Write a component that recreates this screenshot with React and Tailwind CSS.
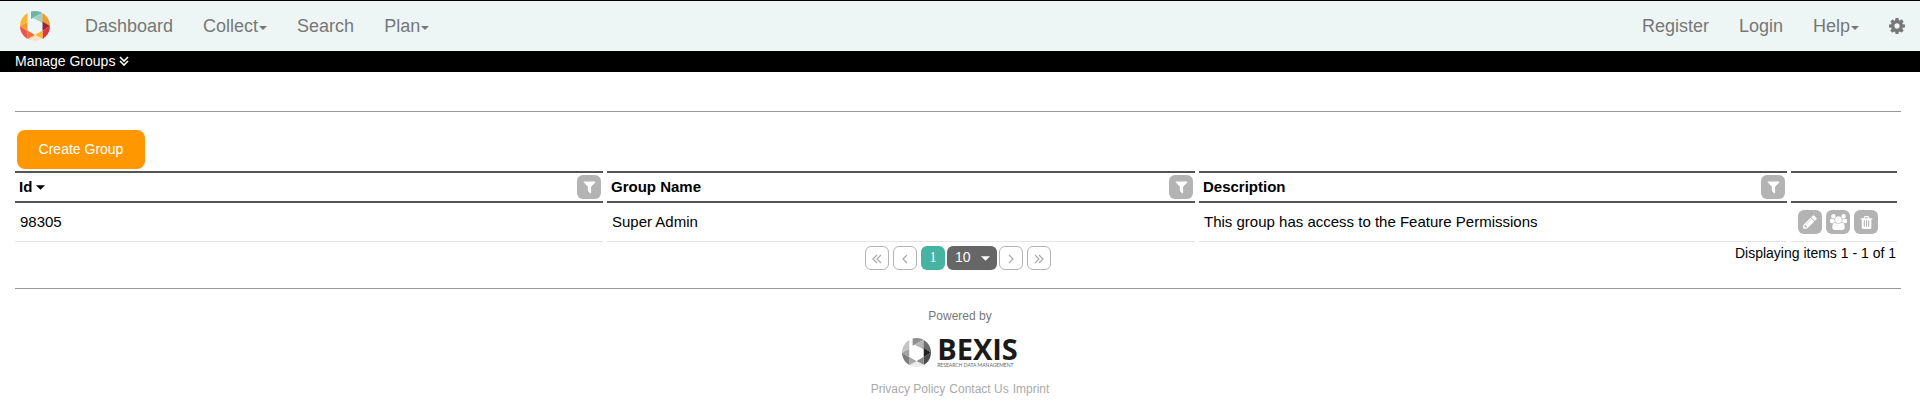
const ICONS = {
  cog: {
    box: "128 128 1536 1536",
    d: "M1152 896q0-106-75-181t-181-75-181 75-75 181 75 181 181 75 181-75 75-181zm512-109v222q0 12-8 23t-20 13l-185 28q-19 54-39 91 35 50 107 138 10 12 10 25t-9 23q-27 37-99 108t-94 71q-12 0-26-9l-138-108q-44 23-91 38-16 136-29 186-7 28-36 28h-222q-14 0-24.5-8.5t-11.5-21.5l-28-184q-49-16-90-37l-141 107q-10 9-25 9-14 0-25-11-126-114-165-168-7-10-7-23 0-12 8-23 15-21 51-66.5t54-70.5q-27-50-41-99l-183-27q-13-2-21-12.5t-8-23.5v-222q0-12 8-23t19-13l186-28q14-46 39-92-40-57-107-138-10-12-10-24 0-10 9-23 26-36 98.5-107.5t94.5-71.5q13 0 26 10l138 107q44-23 91-38 16-136 29-186 7-28 36-28h222q14 0 24.5 8.5t11.5 21.5l28 184q49 16 90 37l142-107q9-9 24-9 13 0 25 10 129 119 165 170 7 8 7 22 0 12-8 23-15 21-51 66.5t-54 70.5q26 50 41 98l183 28q13 2 21 12.5t8 23.5z",
  },
  filter: {
    box: "0 64 1792 1792",
    d: "M1595 295q17 41-14 70l-493 493v742q0 42-39 59-13 5-25 5-27 0-45-19l-256-256q-19-19-19-45v-486l-493-493q-31-29-14-70 17-39 59-39h1280q42 0 59 39z",
  },
  pencil: {
    box: "0 0 1792 1792",
    d: "M491 1536l91-91-235-235-91 91v107h128v128h107zm523-928q0-22-22-22-10 0-17 7l-542 542q-7 7-7 17 0 22 22 22 10 0 17-7l542-542q7-7 7-17zm-54-192l416 416-832 832h-416v-416zm683 96q0 53-37 90l-166 166-416-416 166-165q36-38 90-38 53 0 91 38l235 234q37 39 37 91z",
  },
  users: {
    box: "0 0 1920 1792",
    d: "M593 896q-162 5-265 128H194q-82 0-138-40.5T0 865q0-353 124-353 6 0 43.5 21t97.5 42.5T384 597q67 0 133-23-5 37-5 66 0 159 81 256zm1071 637q0 120-73 189.5t-194 69.5H523q-121 0-194-69.5T256 1533q0-53 3.5-103.5t14-109T300 1212t43-97.5 62-81 85.5-53.5T602 960q10 0 43 21.5t73 48 107 48 135 21.5 135-21.5 107-48 73-48 43-21.5q61 0 111.5 20t85.5 53.5 62 81 43 97.5 26.5 108.5 14 109 3.5 103.5zM640 256q0 106-75 181t-181 75-181-75-75-181 75-181T384 0t181 75 75 181zm704 384q0 159-112.5 271.5T960 1024 688.5 911.5 576 640t112.5-271.5T960 256t271.5 112.5T1344 640zm576 225q0 78-56 118.5t-138 40.5h-134q-103-123-265-128 81-97 81-256 0-29-5-66 66 23 133 23 59 0 119-21.5t97.5-42.5 43.5-21q124 0 124 353zm-128-609q0 106-75 181t-181 75-181-75-75-181 75-181 181-75 181 75 75 181z",
  },
  trash: {
    box: "0 0 1792 1792",
    d: "M704 1376v-704q0-14-9-23t-23-9h-64q-14 0-23 9t-9 23v704q0 14 9 23t23 9h64q14 0 23-9t9-23zm256 0v-704q0-14-9-23t-23-9h-64q-14 0-23 9t-9 23v704q0 14 9 23t23 9h64q14 0 23-9t9-23zm256 0v-704q0-14-9-23t-23-9h-64q-14 0-23 9t-9 23v704q0 14 9 23t23 9h64q14 0 23-9t9-23zm-544-992h448l-48-117q-7-9-17-11h-317q-10 2-17 11zm928 32v64q0 14-9 23t-23 9h-96v948q0 83-47 143.5t-113 60.5h-832q-66 0-113-58.5t-47-141.5v-952h-96q-14 0-23-9t-9-23v-64q0-14 9-23t23-9h309l70-167q15-37 54-63t79-26h320q40 0 79 26t54 63l70 167h309q14 0 23 9t9 23z",
  },
};

function Icon({ name, className }) {
  const icon = ICONS[name];
  return (
    <svg viewBox={icon.box} className={className} fill="currentColor" aria-hidden="true">
      <path d={icon.d} />
    </svg>
  );
}

function Chevrons({ points, className, weight = 1.2 }) {
  return (
    <svg viewBox="0 0 10 10" className={className} fill="none" stroke="currentColor" strokeWidth={weight} aria-hidden="true">
      {points.map((p) => (
        <polyline key={p} points={p} />
      ))}
    </svg>
  );
}

function Caret({ className }) {
  return (
    <svg viewBox="0 0 8 4" className={className} fill="currentColor" aria-hidden="true">
      <path d="M0 0h8L4 4z" />
    </svg>
  );
}

const COLOR_RING = ["#6fb3a6", "#9fd0c0", "#f39a2b", "#8c2a3c", "#e5333a", "#f9b633", "#fde3c0", "#f0703a", "#ea5550", "#f39a2b", "#f9b633"];
const GREY_RING = ["#8f8f8f", "#b5b5b5", "#6e6e6e", "#222222", "#4a4a4a", "#8a8a8a", "#ececec", "#a8a8a8", "#7d7d7d", "#a2a2a2", "#c4c4c4"];
const RING_FACETS = [
  "M11 0H22V2L11 8Z",
  "M22.5 2L23 12L13 7Z",
  "M22.5 0H30V15L22.5 11Z",
  "M22.5 10.5L30 15L22.5 20Z",
  "M30 15V30H22.5V20Z",
  "M22.5 19.5V28L15 24Z",
  "M15 24L23 28V30H7V28Z",
  "M7.5 19.5L15 24L7.5 28Z",
  "M0 15L7.5 20V30H0Z",
  "M0 15L7.5 11V20Z",
  "M7.5 0V11L0 15V0Z",
];

function Ring({ id, colors, className }) {
  return (
    <svg viewBox="0 0 30 30" className={className} aria-hidden="true">
      <clipPath id={id}>
        <circle cx="15" cy="15" r="15" />
      </clipPath>
      <g clipPath={`url(#${id})`}>
        {RING_FACETS.map((d, i) => (
          <path key={d} d={d} fill={colors[i]} />
        ))}
      </g>
    </svg>
  );
}

function NavLink({ children, caret }) {
  return (
    <a href="#" className="flex items-center gap-px px-[15px] text-lg leading-5 text-[#777]">
      {children}
      {caret && <Caret className="mt-[3px] h-1 w-2" />}
    </a>
  );
}

function IconButton({ name, label, iconClass }) {
  return (
    <button type="button" aria-label={label} className="flex size-6 shrink-0 items-center justify-center rounded-md bg-[#b3b3b3] text-white">
      <Icon name={name} className={iconClass} />
    </button>
  );
}

function HeaderCell({ children, label }) {
  return (
    <th className="h-8 border-y-2 border-[#555] p-0 pr-0.5 pl-1 text-left font-bold">
      <div className="flex items-center justify-between">
        <span className="flex items-center gap-1">{children}</span>
        <IconButton name="filter" label={label} iconClass="size-[15px]" />
      </div>
    </th>
  );
}

function PageButton({ label, points }) {
  return (
    <button type="button" aria-label={label} className="flex size-6 items-center justify-center rounded-md border border-[#b3b3b3] pt-0.5 text-[#aaa]">
      <Chevrons points={points} className="size-[10px]" />
    </button>
  );
}

export default function App() {
  return (
    <div className="bg-white font-['Liberation_Sans',Arial,sans-serif] text-sm leading-5 text-black">
      <nav className="flex h-[51px] border-t border-black bg-[#eef6f5]">
        <a href="#" aria-label="Home" className="flex items-center px-5">
          <Ring id="home-ring" colors={COLOR_RING} className="size-[30px]" />
        </a>
        <NavLink>Dashboard</NavLink>
        <NavLink caret>Collect</NavLink>
        <NavLink>Search</NavLink>
        <NavLink caret>Plan</NavLink>
        <div className="ml-auto flex">
          <NavLink>Register</NavLink>
          <NavLink>Login</NavLink>
          <NavLink caret>Help</NavLink>
          <a href="#" aria-label="Settings" className="flex items-center px-[15px] text-[#777]">
            <Icon name="cog" className="size-4" />
          </a>
        </div>
      </nav>
      <button type="button" className="flex h-[21px] w-full items-center gap-1 bg-black px-[15px] pb-0.5 text-white">
        Manage Groups
        <Chevrons points={["1,1 5,5 9,1", "1,5 5,9 9,5"]} className="size-[10px]" weight={1.6} />
      </button>

      <main className="mr-[19px] ml-[15px]">
        <hr className="mt-[39px] border-[#999]" />
        <button type="button" className="mt-[18px] ml-0.5 block h-[39px] min-w-32 rounded-lg bg-[#ff9800] px-5 pb-0.5 text-white">
          Create Group
        </button>
        <div className="mt-0.5 mr-1">
          <div className="-mx-1">
            <table className="w-full table-fixed border-separate border-spacing-x-1 border-spacing-y-0 text-[15px]">
              <colgroup>
                <col />
                <col />
                <col />
                <col className="w-[106px]" />
              </colgroup>
              <thead>
                <tr>
                  <HeaderCell label="Filter by id">
                    Id
                    <Caret className="h-[5px] w-[9px]" />
                  </HeaderCell>
                  <HeaderCell label="Filter by group name">Group Name</HeaderCell>
                  <HeaderCell label="Filter by description">Description</HeaderCell>
                  <td className="border-y-2 border-[#555]" />
                </tr>
              </thead>
              <tbody>
                <tr>
                  <td className="h-[39px] border-b border-[#e6e6e6] px-[5px]">98305</td>
                  <td className="border-b border-[#e6e6e6] px-[5px]">Super Admin</td>
                  <td className="border-b border-[#e6e6e6] px-[5px]">This group has access to the Feature Permissions</td>
                  <td className="border-b border-[#e6e6e6] p-0 pl-[7px]">
                    <div className="flex gap-1">
                      <IconButton name="pencil" label="Edit group" iconClass="size-4" />
                      <IconButton name="users" label="Group members" iconClass="h-4 w-[17px]" />
                      <IconButton name="trash" label="Delete group" iconClass="size-[15px]" />
                    </div>
                  </td>
                </tr>
              </tbody>
            </table>
          </div>
        </div>

        <div className="grid grid-cols-[1fr_auto_1fr] items-start">
          <span />
          <div className="flex gap-0.5 pt-1">
            <div className="flex gap-1">
              <PageButton label="First page" points={["5,1 1,5 5,9", "9,1 5,5 9,9"]} />
              <PageButton label="Previous page" points={["7,1 3,5 7,9"]} />
              <button type="button" className="size-6 rounded-md bg-[#47b3a2] font-['Liberation_Serif',serif] text-white">
                1
              </button>
            </div>
            <div className="relative text-white">
              <select aria-label="Items per page" defaultValue="10" className="block h-6 w-[50px] appearance-none rounded-md bg-[#666] pb-0.5 pl-2">
                <option>10</option>
                <option>25</option>
                <option>50</option>
              </select>
              <Caret className="pointer-events-none absolute top-2.5 right-[7px] h-[5px] w-[9px]" />
            </div>
            <div className="flex gap-1">
              <PageButton label="Next page" points={["3,1 7,5 3,9"]} />
              <PageButton label="Last page" points={["1,1 5,5 1,9", "5,1 9,5 5,9"]} />
            </div>
          </div>
          <span className="mt-px mr-[5px] justify-self-end">Displaying items 1 - 1 of 1</span>
        </div>
        <hr className="mt-[18px] border-[#999]" />
      </main>

      <footer className="flex flex-col items-center pt-[17px] text-xs leading-5 text-[#777]">
        <span>Powered by</span>
        <div className="mt-3 flex gap-1.5">
          <Ring id="footer-ring" colors={GREY_RING} className="size-[29px]" />
          <div className="flex flex-col">
            <span className="font-['Open_Sans',sans-serif] text-[29px] leading-[22px] font-bold text-[#1a1a1a]">BEXIS</span>
            <span className="mt-0.5 font-['Lato',sans-serif] text-[5px] leading-[6px] whitespace-nowrap text-[#666]">RESEARCH DATA MANAGEMENT</span>
          </div>
        </div>
        <div className="mt-[11px] flex gap-1 text-[#aaa]">
          <a href="#">Privacy Policy</a>
          <a href="#">Contact Us</a>
          <a href="#">Imprint</a>
        </div>
      </footer>
    </div>
  );
}
